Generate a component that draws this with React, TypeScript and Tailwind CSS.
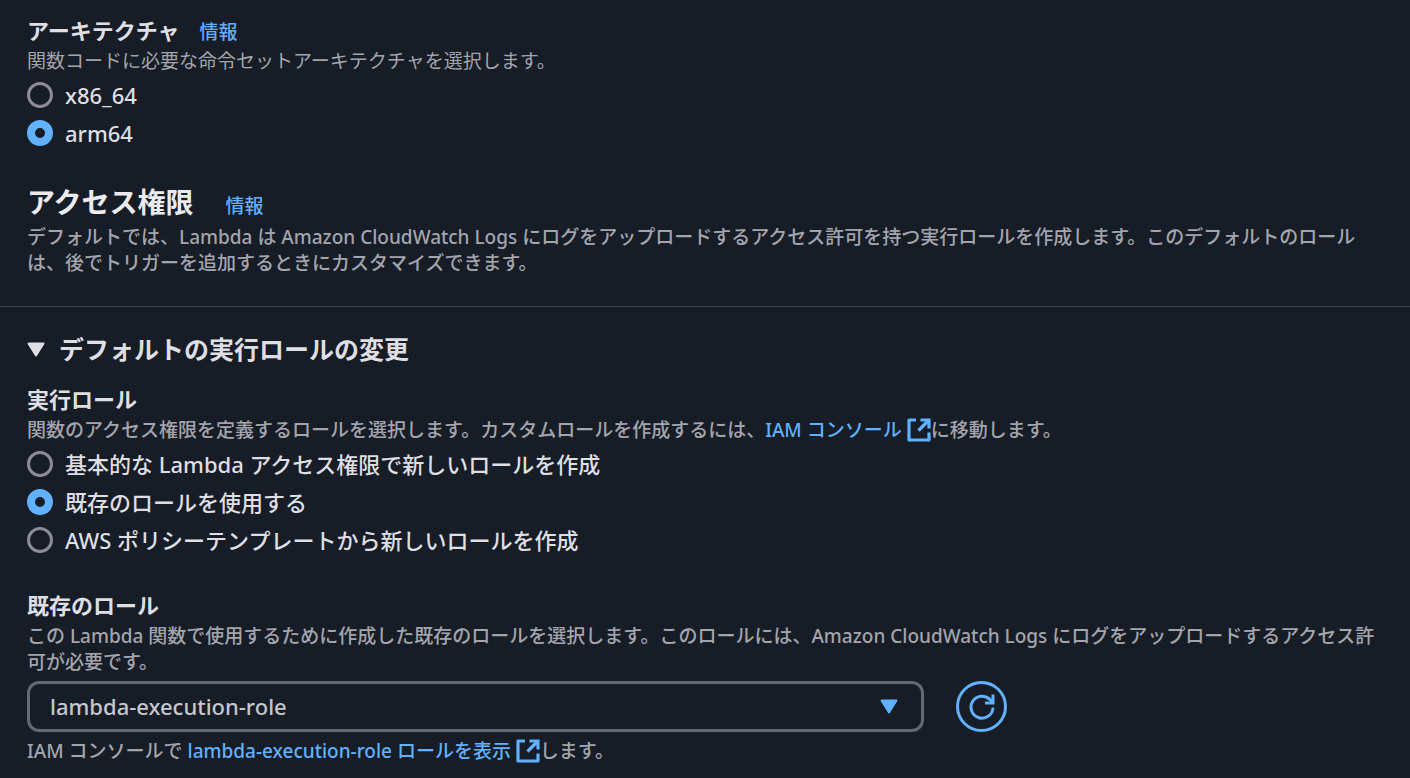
import React, { useState } from 'react';

interface RadioOptionProps {
  name: string;
  label: string;
  checked: boolean;
  onSelect: () => void;
}

function RadioOption({ name, label, checked, onSelect }: RadioOptionProps) {
  return (
    <label className="flex items-center gap-3 text-[22px] leading-[26px] cursor-pointer">
      <input
        type="radio"
        name={name}
        checked={checked}
        onChange={onSelect}
        className="appearance-none shrink-0 size-[26px] rounded-full border-3 border-[#8c8c94] bg-[#161d26] checked:border-8 checked:border-[#61b1ff]"
      />
      <span>{label}</span>
    </label>
  );
}

function ExternalIcon() {
  return (
    <svg
      viewBox="0 0 24 24"
      className="inline-block size-6 align-[-5px]"
      fill="none"
      stroke="currentColor"
      strokeWidth="3.2"
      strokeLinejoin="round"
      aria-hidden="true"
    >
      <path d="M9 2H2v20h20v-7.5" />
      <path d="M13.5 2H22v8.5" strokeLinejoin="miter" />
      <path d="M22 2 11.5 12.5" />
    </svg>
  );
}

function RefreshIcon() {
  return (
    <svg viewBox="0 0 26 26" className="size-[26px]" fill="none" stroke="currentColor" strokeWidth="3" aria-hidden="true">
      <path d="M24 13.5A11 11 0 1 1 20.8 5.4L24 8.6" />
      <path d="M24 .5V9h-8" />
    </svg>
  );
}

function Caret({ className }: { className: string }) {
  return (
    <svg viewBox="0 0 18 15" className={className} fill="currentColor" stroke="currentColor" strokeWidth="2" strokeLinejoin="round" aria-hidden="true">
      <path d="M1.5 1.5h15L9 13.5z" />
    </svg>
  );
}

export default function App() {
  const [arch, setArch] = useState('arm64');
  const [roleType, setRoleType] = useState('existing');

  return (
    <main
      lang="ja"
      className="min-h-screen bg-[#161d26] text-[#dedee3] font-medium font-['Noto_Sans','Noto_Sans_CJK_JP',sans-serif]"
    >
      {/* Architecture */}
      <section className="pl-[27px] pr-8 pt-3.5">
        <div className="flex items-baseline gap-5">
          <h3 className="text-[22px] leading-8 font-bold">アーキテクチャ</h3>
          <a href="#arch-info" className="text-[19px] leading-8 text-[#61b1ff]">情報</a>
        </div>
        <p className="text-[19px] leading-[26px] font-normal text-[#a4a4ad]">
          関数コードに必要な命令セットアーキテクチャを選択します。
        </p>
        <div className="mt-2 flex flex-col items-start gap-3">
          <RadioOption name="arch" label="x86_64" checked={arch === 'x86'} onSelect={() => setArch('x86')} />
          <RadioOption name="arch" label="arm64" checked={arch === 'arm64'} onSelect={() => setArch('arm64')} />
        </div>
      </section>

      {/* Permissions */}
      <section className="pl-[27px] pr-8 pt-9 pb-[30px] border-b border-[#424650]">
        <div className="flex items-baseline gap-8">
          <h2 className="text-[28px] leading-10 font-bold text-[#ebebf0]">アクセス権限</h2>
          <a href="#permission-info" className="text-[19px] leading-8 text-[#61b1ff]">情報</a>
        </div>
        <p className="mt-0.5 text-[19px] leading-[26px] text-[#a4a4ad]">
          デフォルトでは、Lambda は Amazon CloudWatch Logs にログをアップロードするアクセス許可を持つ実行ロールを作成します。このデフォルトのロールは、後でトリガーを追加するときにカスタマイズできます。
        </p>
      </section>

      {/* Execution role */}
      <section className="pl-[27px] pr-7 pt-6">
        <button type="button" aria-expanded="true" className="flex items-center gap-3.5 text-[25px] leading-9 font-bold">
          <Caret className="w-[18px] h-[15px]" />
          デフォルトの実行ロールの変更
        </button>

        <h3 className="mt-4 text-[22px] leading-8 font-bold">実行ロール</h3>
        <p className="mt-0.5 text-[19px] leading-[26px] text-[#a4a4ad]">
          関数のアクセス権限を定義するロールを選択します。カスタムロールを作成するには、
          <a href="#iam" className="text-[#61b1ff]">
            IAM コンソール <ExternalIcon />
          </a>
          に移動します。
        </p>
        <div className="mt-2 flex flex-col items-start gap-3">
          <RadioOption name="role" label="基本的な Lambda アクセス権限で新しいロールを作成" checked={roleType === 'basic'} onSelect={() => setRoleType('basic')} />
          <RadioOption name="role" label="既存のロールを使用する" checked={roleType === 'existing'} onSelect={() => setRoleType('existing')} />
          <RadioOption name="role" label="AWS ポリシーテンプレートから新しいロールを作成" checked={roleType === 'template'} onSelect={() => setRoleType('template')} />
        </div>

        <label htmlFor="existing-role" className="mt-9 block text-[22px] leading-8 font-bold">既存のロール</label>
        <p className="mt-0.5 text-[19px] leading-[26px] text-[#a4a4ad]">
          この Lambda 関数で使用するために作成した既存のロールを選択します。このロールには、Amazon CloudWatch Logs にログをアップロードするアクセス許可が必要です。
        </p>
        <div className="mt-1.5 flex items-center gap-8">
          <div className="relative w-[66.2%]">
            <select
              id="existing-role"
              className="appearance-none block w-full h-[51px] rounded-xl border-3 border-[#656871] bg-[#161d26] px-5 text-[22px] text-[#c6c6cd]"
            >
              <option>lambda-execution-role</option>
            </select>
            <Caret className="absolute right-[26px] top-[18px] w-[18px] h-[15px] text-[#61b1ff] pointer-events-none" />
          </div>
          <button
            type="button"
            aria-label="更新"
            className="flex shrink-0 size-[51px] items-center justify-center rounded-full border-3 border-[#61b1ff] text-[#61b1ff]"
          >
            <RefreshIcon />
          </button>
        </div>
        <p className="mt-1.5 pb-3 text-[19px] leading-[26px] text-[#a4a4ad]">
          IAM コンソールで{' '}
          <a href="#role" className="text-[#61b1ff]">
            lambda-execution-role ロールを表示 <ExternalIcon />
          </a>
          します。
        </p>
      </section>
    </main>
  );
}
